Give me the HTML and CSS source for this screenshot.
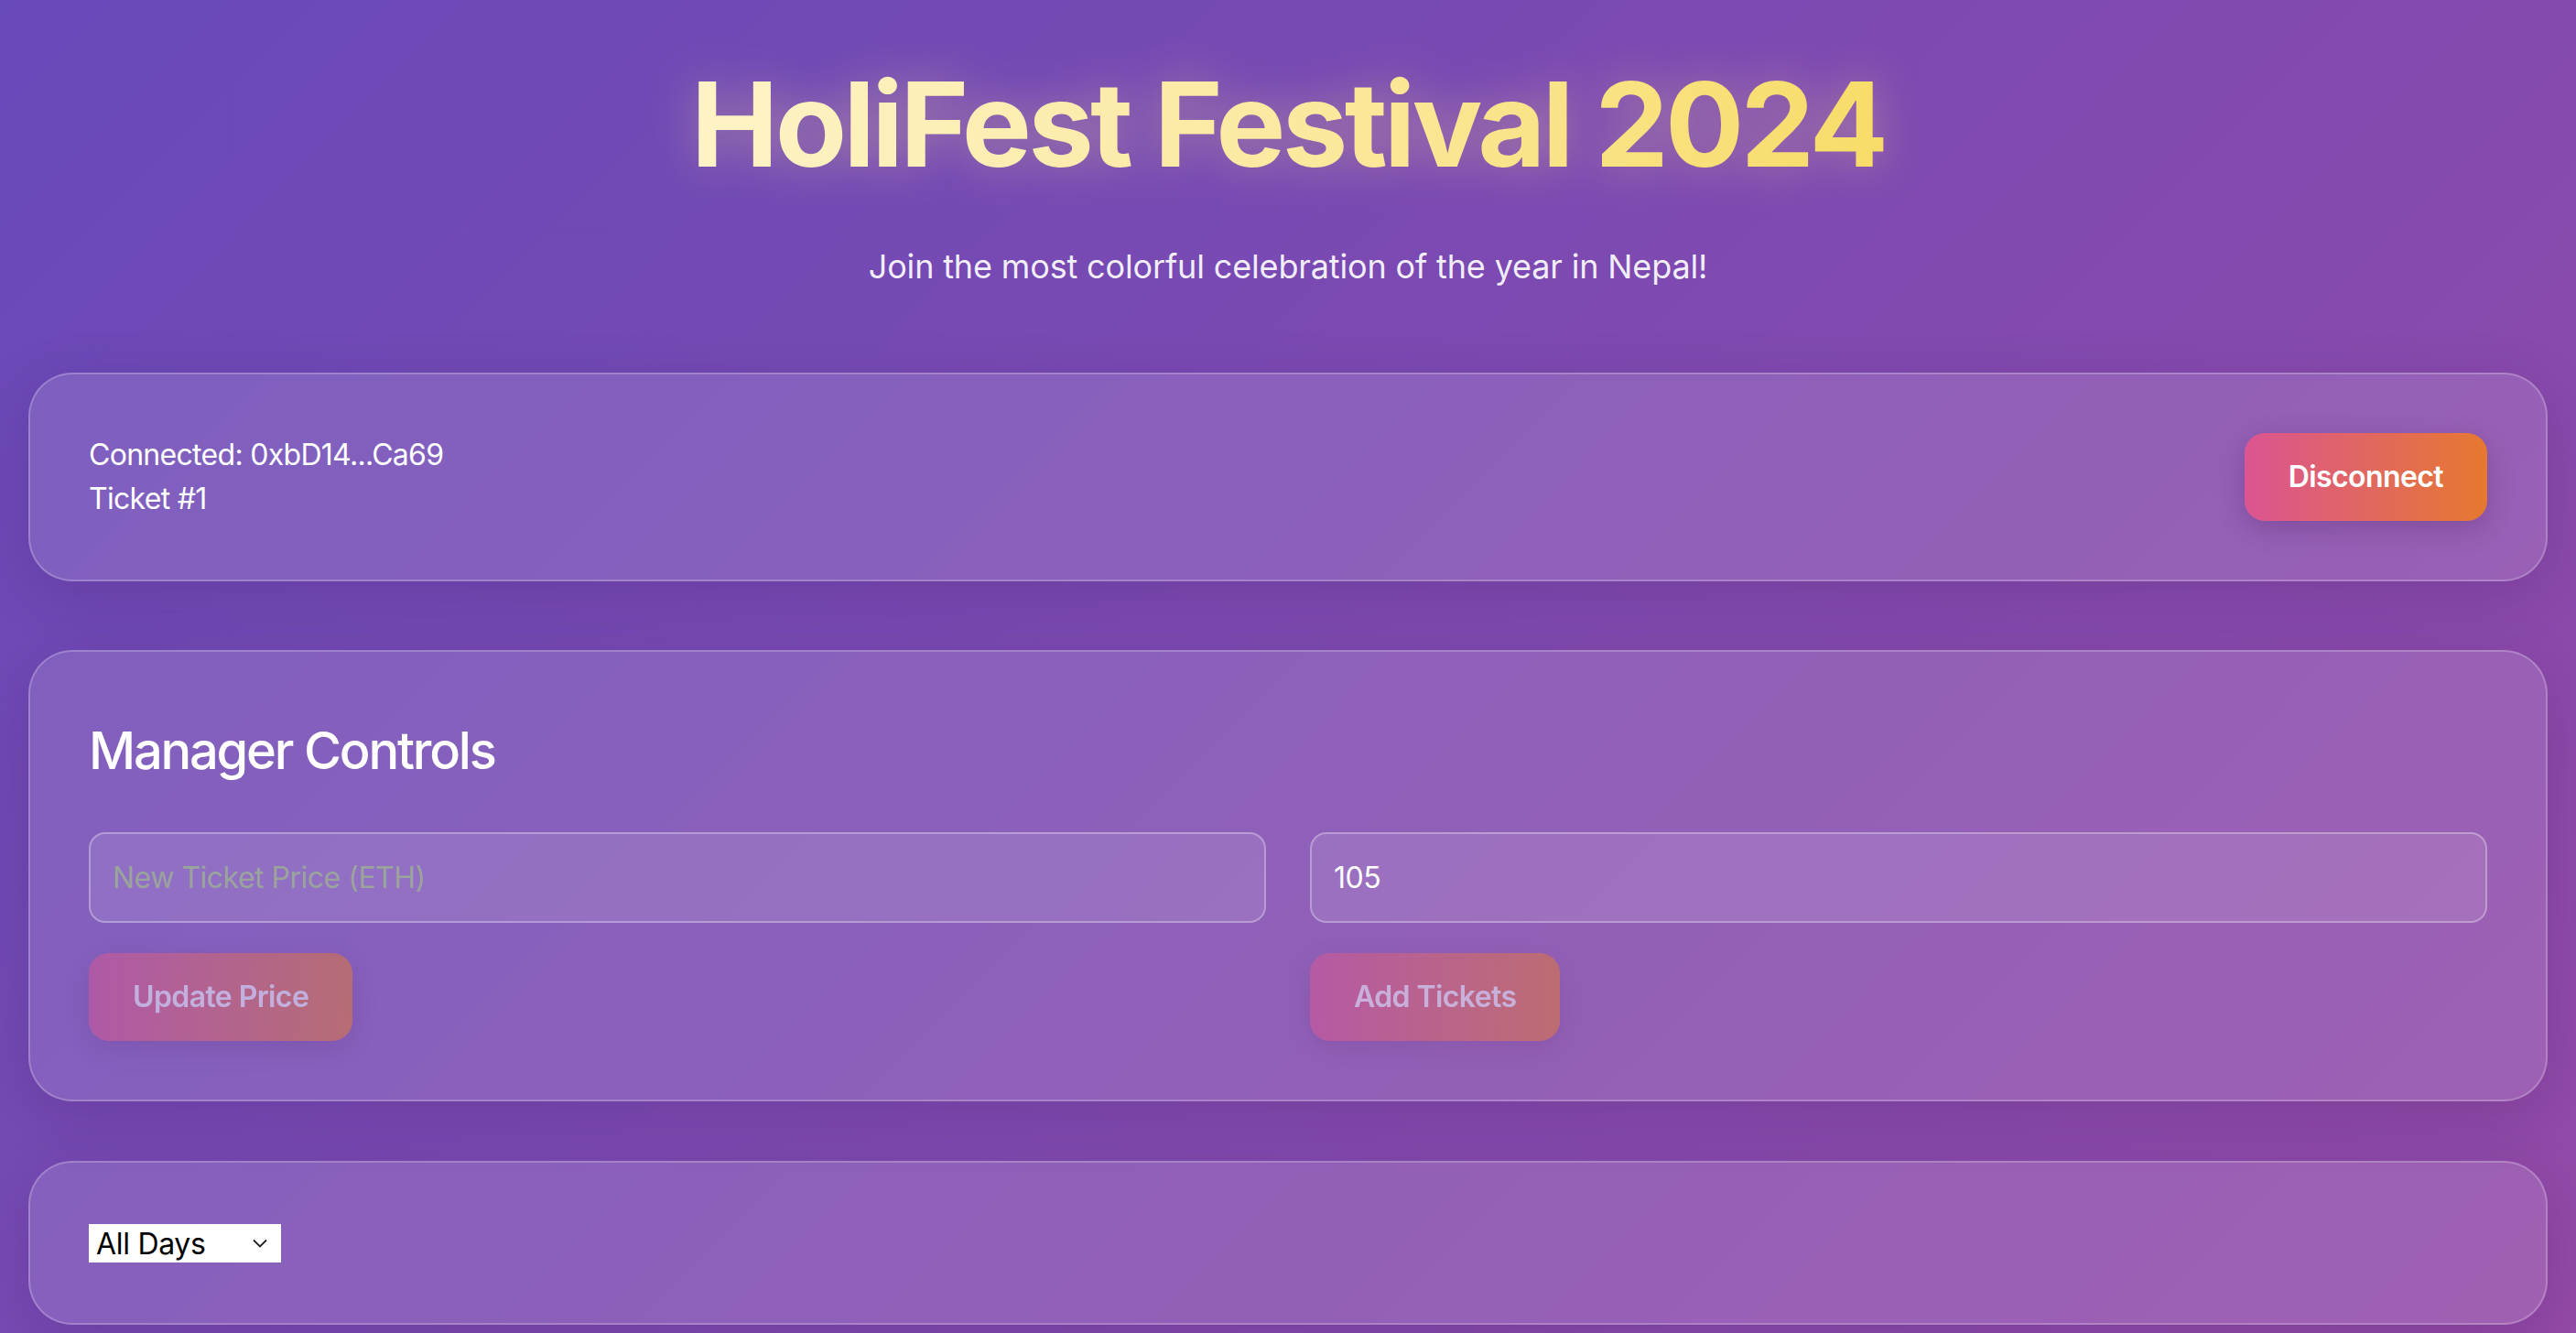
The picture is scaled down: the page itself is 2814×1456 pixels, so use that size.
FILE: index.html
```html
<!DOCTYPE html>
<html lang="en">
<head>
<meta charset="utf-8">
<title>HoliFest Festival 2024</title>
<link rel="stylesheet" href="styles.css">
</head>
<body>
<div class="app">
  <header class="hero">
    <h1 class="title">HoliFest Festival 2024</h1>
    <p class="subtitle">Join the most colorful celebration of the year in Nepal!</p>
  </header>

  <section class="card wallet">
    <div class="wallet-info">
      <div>Connected: 0xbD14...Ca69</div>
      <div>Ticket #1</div>
    </div>
    <button class="btn">Disconnect</button>
  </section>

  <section class="card manager">
    <h2 class="card-title">Manager Controls</h2>
    <div class="controls-grid">
      <div class="control">
        <input class="field" type="text" placeholder="New Ticket Price (ETH)">
        <button class="btn" disabled>Update Price</button>
      </div>
      <div class="control">
        <input class="field" type="text" value="105">
        <button class="btn" disabled>Add Tickets</button>
      </div>
    </div>
  </section>

  <section class="card filter">
    <div class="select-wrap">
      <select class="day-select">
        <option>All Days</option>
      </select>
      <svg class="chevron" width="16" height="10" viewBox="0 0 16 10" aria-hidden="true"><path d="M1 1.5 L8 8.5 L15 1.5" fill="none" stroke="#222" stroke-width="1.8"/></svg>
    </div>
  </section>
</div>
</body>
</html>
```

FILE: styles.css
```css
* { box-sizing: border-box; }

html, body {
  margin: 0;
  padding: 0;
}

body {
  min-height: 100vh;
  background: linear-gradient(135deg, #6849b9 0%, #7e4ab1 50%, #944aa8 100%);
  font-family: Inter, "Noto Sans", "Liberation Sans", sans-serif;
  color: #ffffff;
}

.app {
  padding: 58px 31px 40px;
}

.hero {
  text-align: center;
  margin-bottom: 94px;
}

.title {
  display: block;
  width: fit-content;
  margin: 0 auto;
  font-size: 128px;
  font-weight: 700;
  line-height: 155px;
  letter-spacing: -3.8px;
  background: linear-gradient(90deg, #fdf3c6 0%, #fbe9a0 50%, #f7dc68 100%);
  -webkit-background-clip: text;
  background-clip: text;
  -webkit-text-fill-color: transparent;
  color: transparent;
  filter: drop-shadow(0 0 24px rgba(255, 226, 140, 0.35));
}

.subtitle {
  margin: 56px 0 0;
  font-size: 36px;
  line-height: 44px;
  letter-spacing: -0.15px;
  color: rgba(255, 255, 255, 0.92);
}

.card {
  background: rgba(255, 255, 255, 0.12);
  border: 2px solid rgba(255, 255, 255, 0.22);
  border-radius: 48px;
  padding: 64px;
  box-shadow: 0 16px 64px rgba(40, 0, 60, 0.16);
}

.wallet {
  display: flex;
  align-items: center;
  justify-content: space-between;
  margin-bottom: 75px;
}

.wallet-info {
  font-size: 32px;
  line-height: 48px;
  letter-spacing: -0.7px;
}

.btn {
  font-family: inherit;
  font-size: 32px;
  font-weight: 600;
  line-height: 48px;
  letter-spacing: -0.6px;
  padding: 24px 48px;
  border: none;
  border-radius: 22px;
  color: #ffffff;
  background: linear-gradient(90deg, #db5592 0%, #e6792f 100%);
  box-shadow: 0 8px 30px rgba(50, 0, 60, 0.22);
  cursor: pointer;
}

.btn:disabled {
  opacity: 0.5;
  cursor: not-allowed;
}

.manager {
  margin-bottom: 65px;
}

.card-title {
  margin: 10px 0 55px;
  font-size: 56px;
  font-weight: 500;
  line-height: 68px;
  letter-spacing: -2.2px;
}

.controls-grid {
  display: grid;
  grid-template-columns: 1fr 1fr;
  gap: 48px;
}

.control {
  display: flex;
  flex-direction: column;
  align-items: flex-start;
  gap: 33px;
}

.field {
  width: 100%;
  height: 99px;
  padding: 0 24px;
  font-family: inherit;
  font-size: 32px;
  letter-spacing: -0.5px;
  color: #ffffff;
  background: rgba(255, 255, 255, 0.1);
  border: 2px solid rgba(255, 255, 255, 0.3);
  border-radius: 18px;
  outline: none;
}

.field::placeholder {
  color: #9aa49c;
}

.filter {
  padding-top: 67px;
  padding-bottom: 66px;
}

.select-wrap {
  position: relative;
  width: 210px;
  height: 42px;
}

.day-select {
  -webkit-appearance: none;
  appearance: none;
  width: 210px;
  height: 42px;
  padding: 0 8px;
  font-family: Inter, "Liberation Sans", sans-serif;
  font-size: 32px;
  letter-spacing: -0.3px;
  color: #000000;
  background: #ffffff;
  border: none;
  border-radius: 0;
}

.chevron {
  position: absolute;
  right: 15px;
  top: 16px;
  pointer-events: none;
}
```
